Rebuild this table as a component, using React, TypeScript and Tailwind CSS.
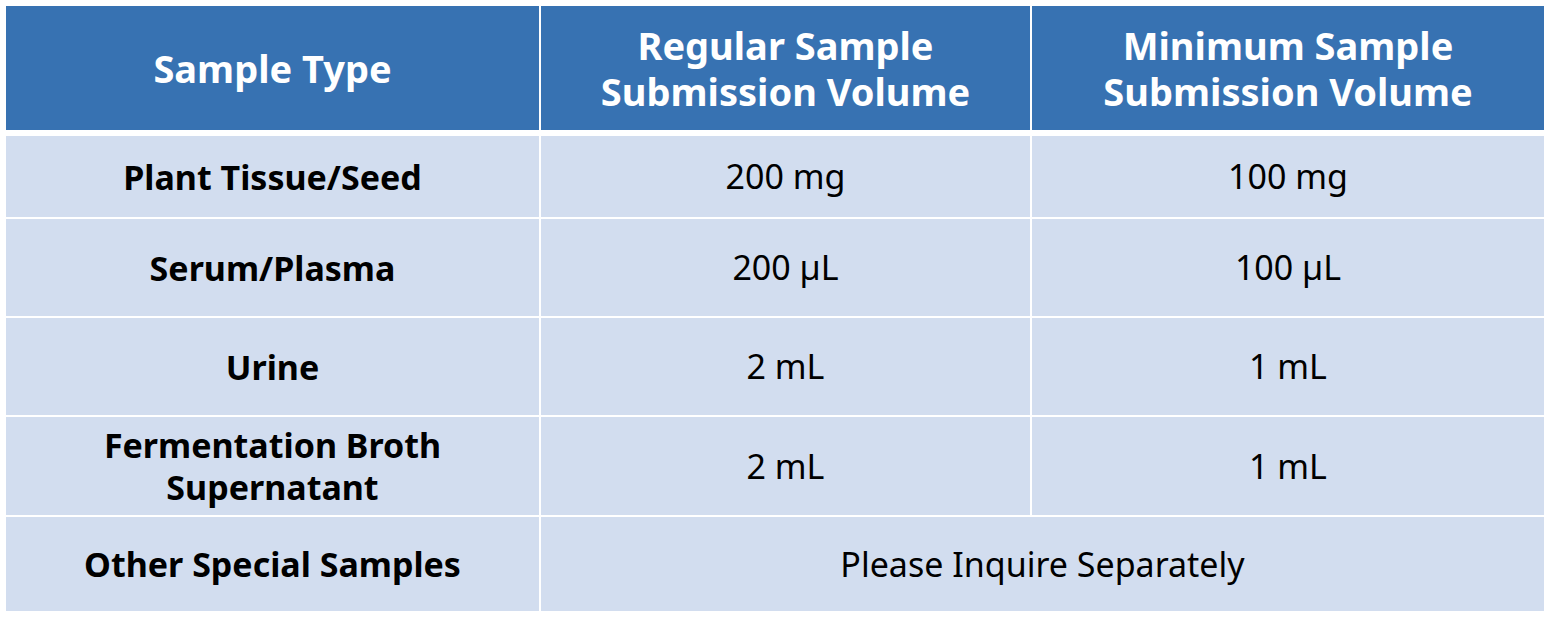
const rows: { type: string[]; regular: string; minimum: string }[] = [
  { type: ["Plant Tissue/Seed"], regular: "200 mg", minimum: "100 mg" },
  { type: ["Serum/Plasma"], regular: "200 µL", minimum: "100 µL" },
  { type: ["Urine"], regular: "2 mL", minimum: "1 mL" },
  { type: ["Fermentation Broth", "Supernatant"], regular: "2 mL", minimum: "1 mL" },
];

const rowHeights = ["h-[81px]", "h-[97px]", "h-[97px]", "h-[98px]"];

const App = () => {
  return (
    <div
      className="w-[1552px] h-[617px] bg-white p-[6px] text-black"
      style={{ fontFamily: '"Noto Sans", "Open Sans", sans-serif' }}
    >
      <div className="grid grid-cols-[533px_489px_512px] gap-x-[2px] bg-white">
        <div className="h-[124px] bg-[#3772b2] flex items-center justify-center text-white font-bold text-[38px] leading-[46px] text-center">
          Sample Type
        </div>
        <div className="h-[124px] bg-[#3772b2] flex items-center justify-center text-white font-bold text-[38px] leading-[46px] text-center">
          Regular Sample
          <br />
          Submission Volume
        </div>
        <div className="h-[124px] bg-[#3772b2] flex items-center justify-center text-white font-bold text-[38px] leading-[46px] text-center">
          Minimum Sample
          <br />
          Submission Volume
        </div>
      </div>

      <div className="mt-[6px] grid grid-cols-[533px_489px_512px] gap-x-[2px] gap-y-[2px] bg-white">
        {rows.map((r, i) => (
          <div key={i} className="contents">
            <div
              className={`${rowHeights[i]} bg-[#d2ddef] flex flex-col items-center justify-center font-bold text-[34px] leading-[42px] text-center`}
            >
              {r.type.map((t) => (
                <span key={t}>{t}</span>
              ))}
            </div>
            <div className={`${rowHeights[i]} bg-[#d2ddef] flex items-center justify-center text-[34px]`}>
              {r.regular}
            </div>
            <div className={`${rowHeights[i]} bg-[#d2ddef] flex items-center justify-center text-[34px]`}>
              {r.minimum}
            </div>
          </div>
        ))}
        <div className="h-[94px] bg-[#d2ddef] flex items-center justify-center font-bold text-[34px]">
          Other Special Samples
        </div>
        <div className="col-span-2 h-[94px] bg-[#d2ddef] flex items-center justify-center text-[34px]">
          Please Inquire Separately
        </div>
      </div>
    </div>
  );
};

export default App;
